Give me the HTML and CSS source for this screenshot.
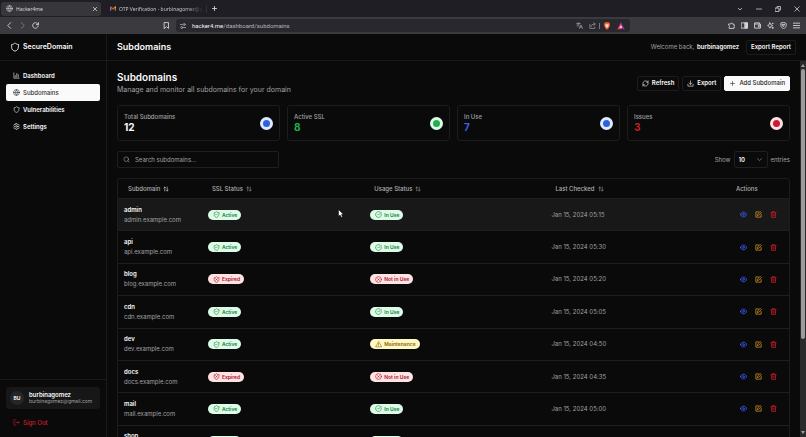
FILE: index.html
```
<!DOCTYPE html>
<html lang="en">
  <head>
    <meta charset="UTF-8" />
    <meta name="viewport" content="width=device-width, initial-scale=1.0" />
    <title>Hacker4me</title>
    <link rel="stylesheet" href="styles.css" />
  </head>
  <body>
    <svg class="sprite" aria-hidden="true">
      <symbol id="globe" viewBox="0 0 24 24"><circle cx="12" cy="12" r="10" /><path d="M12 2a15 15 0 0 0 0 20 15 15 0 0 0 0-20M2 12h20" /></symbol>
      <symbol id="shield" viewBox="0 0 24 24"><path d="M20 13c0 5-3.500 7.500-8 9-4.500-1.500-8-4-8-9V6c3 0 6-1.500 8-4 2 2.500 5 4 8 4z" /></symbol>
      <symbol id="shield-check" viewBox="0 0 24 24"><path d="M20 13c0 5-3.500 7.500-8 9-4.500-1.500-8-4-8-9V6c3 0 6-1.500 8-4 2 2.500 5 4 8 4zM9 12l2 2 4-4" /></symbol>
      <symbol id="shield-x" viewBox="0 0 24 24"><path d="M20 13c0 5-3.500 7.500-8 9-4.500-1.500-8-4-8-9V6c3 0 6-1.500 8-4 2 2.500 5 4 8 4zM9 9l6 6M15 9l-6 6" /></symbol>
      <symbol id="check" viewBox="0 0 24 24"><path d="M21.800 10A10 10 0 1 1 17 3.300M9 11l3 3L22 4" /></symbol>
      <symbol id="cross" viewBox="0 0 24 24"><circle cx="12" cy="12" r="10" /><path d="M15 9l-6 6M9 9l6 6" /></symbol>
      <symbol id="warning" viewBox="0 0 24 24"><path d="M12 3 2 20h20zM12 9v4M12 16.500v.5" /></symbol>
      <symbol id="chart" viewBox="0 0 24 24"><path d="M3 3v18h18M8 17v-4M13 17V5M18 17V9" /></symbol>
      <symbol id="gear" viewBox="0 0 24 24"><path d="M10 2h4l.6 3 2 1.100 2.800-1 2 3.500-2.200 2v2.800l2.200 2-2 3.500-2.800-1-2 1.100-.6 3h-4l-.6-3-2-1.100-2.800 1-2-3.500 2.200-2v-2.800l-2.200-2 2-3.500 2.800 1 2-1.100z" /><circle cx="12" cy="12" r="3" /></symbol>
      <symbol id="sort" viewBox="0 0 24 24"><path d="m3 8 4-4 4 4M7 4v16M21 16l-4 4-4-4M17 20V4" /></symbol>
      <symbol id="eye" viewBox="0 0 24 24"><path d="M2 12c0-3 4-8 10-8s10 5 10 8-4 8-10 8-10-5-10-8z" /><circle cx="12" cy="12" r="3" /></symbol>
      <symbol id="edit" viewBox="0 0 24 24"><path d="M12 3H3v18h18v-9M18.500 2.500l3 3L12 15l-4 1 1-4z" /></symbol>
      <symbol id="trash" viewBox="0 0 24 24"><path d="M3 6h18M5 6v16h14V6M8 6V2h8v4M10 11v6M14 11v6" /></symbol>
      <symbol id="refresh" viewBox="0 0 24 24"><path d="M3 12a9 9 0 0 1 15.500-6.200L21 8M21 3v5h-5M21 12a9 9 0 0 1-15.500 6.200L3 16M8 16H3v5" /></symbol>
      <symbol id="download" viewBox="0 0 24 24"><path d="M3 15v6h18v-6M7 10l5 5 5-5M12 15V3" /></symbol>
      <symbol id="plus" viewBox="0 0 24 24"><path d="M5 12h14M12 5v14" /></symbol>
      <symbol id="search" viewBox="0 0 24 24"><circle cx="11" cy="11" r="8" /><path d="m21 21-4.300-4.300" /></symbol>
      <symbol id="logout" viewBox="0 0 24 24"><path d="M9 21H3V3h6M16 17l5-5-5-5M21 12H9" /></symbol>
      <symbol id="chevron-down" viewBox="0 0 24 24"><path d="m5 9 7 7 7-7" /></symbol>
    </svg>

    <div class="browser">
      <div class="tab-bar">
        <div class="tab active">
          <svg class="icon"><use href="#globe" /></svg>
          <span class="tab-title">Hacker4me</span>
          <button class="bare" aria-label="Close tab"><svg class="icon tiny heavy" viewBox="0 0 24 24"><path d="M5 5l14 14M19 5 5 19" /></svg></button>
        </div>
        <div class="tab">
          <svg class="mail-logo" viewBox="0 0 24 18"><path d="M0 2v16h5V6z" fill="#4285f4" /><path d="M24 2v16h-5V6z" fill="#34a853" /><path d="M0 2l3-2 9 7 9-7 3 2v3l-12 9L0 5z" fill="#ea4335" /><path d="M19 3l3-3 2 2v4l-5 3z" fill="#fbbc04" /></svg>
          <span class="tab-title fade">OTP Verification - burbinagomez@g</span>
        </div>
        <button class="bare new-tab" aria-label="New tab"><svg class="icon heavy"><use href="#plus" /></svg></button>
        <div class="window-controls">
          <button class="bare" aria-label="Search tabs"><svg class="icon tiny heavy"><use href="#chevron-down" /></svg></button>
          <button class="bare" aria-label="Minimize"><svg class="icon tiny heavy" viewBox="0 0 24 24"><path d="M2 12h20" /></svg></button>
          <button class="bare" aria-label="Restore"><svg class="icon tiny heavy" viewBox="0 0 24 24"><path d="M2 8h14v14H2zM8 8V2h14v14h-6" /></svg></button>
          <button class="bare" aria-label="Close"><svg class="icon tiny heavy" viewBox="0 0 24 24"><path d="M3 3l18 18M21 3 3 21" /></svg></button>
        </div>
      </div>
      <div class="toolbar">
        <div class="toolbar-nav">
          <button class="bare" aria-label="Back"><svg class="icon heavy" viewBox="0 0 24 24"><path d="m16 2-10 10 10 10" /></svg></button>
          <button class="bare dim" aria-label="Forward"><svg class="icon heavy" viewBox="0 0 24 24"><path d="m8 2 10 10L8 22" /></svg></button>
          <button class="bare" aria-label="Reload"><svg class="icon heavy" viewBox="0 0 24 24"><path d="M21 14a9.500 9.500 0 1 1-2-8l3 3M22 2v7h-7" /></svg></button>
          <button class="bare bookmark" aria-label="Bookmark"><svg class="icon heavy" viewBox="0 0 24 24"><path d="M5 2h14v20l-7-6-7 6z" /></svg></button>
        </div>
        <div class="address">
          <svg class="icon tiny heavy" viewBox="0 0 24 24"><path d="M2 6h7M15 18h7" /><circle cx="17" cy="6" r="4" /><circle cx="7" cy="18" r="4" /></svg>
          <span class="url"><b>hacker4.me</b>/dashboard/subdomains</span>
          <svg class="icon" viewBox="0 0 24 24"><path d="M2 5h12M8 2v3M4 14c4-2 7-5 8-9M4 8c2 4 4 5 7 7M12 22l5-12 5 12M14 18h6" /></svg>
          <svg class="icon" viewBox="0 0 24 24"><path d="M3 8v14h17v-5M7 16c0-6 4-9 14-9M16 2l5 5-5 5" /></svg>
          <span class="bar"></span>
          <svg class="brave" viewBox="0 0 24 24"><path d="M7 1h10l4 4-1 3 1 2-4 9-5 4-5-4-4-9 1-2-1-3z" fill="#f4602d" /><path d="M7 7h10l-1 6-4 5-4-5z" fill="#fbe0d5" /></svg>
          <svg class="brave" viewBox="0 0 24 24"><path d="M12 1 1 22h11z" fill="#e0455a" /><path d="M12 1l11 21H12z" fill="#9c2a9c" /><path d="m12 10 4 7H8z" fill="#fff" /></svg>
        </div>
        <div class="toolbar-tools">
          <button class="bare" aria-label="Extensions"><svg class="icon heavy" viewBox="0 0 24 24"><path d="M3 7h6a3 3 0 1 1 6 0h5v5a3 3 0 1 1 0 5v5H4v-5a3 3 0 0 0 0-5z" /></svg></button>
          <button class="bare" aria-label="Side panel"><svg class="icon heavy" viewBox="0 0 24 24"><path d="M2 3h20v18H2z" /><path d="M14 3h8v18h-8z" fill="currentColor" /></svg></button>
          <button class="bare" aria-label="Wallet"><svg class="icon heavy" viewBox="0 0 24 24"><path d="M19 7V3H2v18h20V7H3M22 11h-7v6h7" /></svg></button>
          <button class="bare" aria-label="Assistant"><svg class="icon heavy" viewBox="0 0 24 24"><path d="M10 3l3 6 6 3-6 3-3 6-3-6-5-3 5-3z" /><circle cx="19" cy="20" r="2" /><circle cx="19" cy="5" r="1" /></svg></button>
          <button class="bare" aria-label="VPN"><svg class="icon heavy" viewBox="0 0 24 24"><path d="M12 1l9 4v7c0 6-5 9-9 11-4-2-9-5-9-11V5z" /><path d="M8 8h8l-4 7z" /></svg></button>
          <button class="bare" aria-label="Menu"><svg class="icon heavy" viewBox="0 0 24 24"><path d="M1 4h22M1 12h22M1 20h22" /></svg></button>
        </div>
      </div>
    </div>

    <div class="app">
      <aside class="sidebar">
        <div class="brand">
          <svg class="icon big"><use href="#shield" /></svg>
          SecureDomain
        </div>
        <nav class="menu">
          <a href="#dashboard"><svg class="icon"><use href="#chart" /></svg>Dashboard</a>
          <a href="#subdomains" class="current"><svg class="icon"><use href="#globe" /></svg>Subdomains</a>
          <a href="#vulnerabilities"><svg class="icon"><use href="#shield" /></svg>Vulnerabilities</a>
          <a href="#settings"><svg class="icon"><use href="#gear" /></svg>Settings</a>
        </nav>
        <div class="account">
          <div class="user-card">
            <div class="avatar">BU</div>
            <div>
              <div class="user-name">burbinagomez</div>
              <div class="user-email">burbinagomez@gmail.com</div>
            </div>
          </div>
          <button class="sign-out"><svg class="icon"><use href="#logout" /></svg>Sign Out</button>
        </div>
      </aside>

      <div class="main">
        <header class="topbar">
          <div class="topbar-title">Subdomains</div>
          <div class="welcome">Welcome back, <b>burbinagomez</b></div>
          <button class="btn">Export Report</button>
        </header>

        <div class="scroll-area">
          <main class="content">
            <div class="page-head">
              <div>
                <h1>Subdomains</h1>
                <p>Manage and monitor all subdomains for your domain</p>
              </div>
              <div class="page-actions">
                <button class="btn"><svg class="icon"><use href="#refresh" /></svg>Refresh</button>
                <button class="btn"><svg class="icon"><use href="#download" /></svg>Export</button>
                <button class="btn primary"><svg class="icon"><use href="#plus" /></svg>Add Subdomain</button>
              </div>
            </div>

            <div class="stats">
              <div class="stat">
                <div><div class="stat-label">Total Subdomains</div><div class="stat-value">12</div></div>
                <span class="dot blue"></span>
              </div>
              <div class="stat">
                <div><div class="stat-label">Active SSL</div><div class="stat-value text-green">8</div></div>
                <span class="dot green"></span>
              </div>
              <div class="stat">
                <div><div class="stat-label">In Use</div><div class="stat-value text-blue">7</div></div>
                <span class="dot blue"></span>
              </div>
              <div class="stat">
                <div><div class="stat-label">Issues</div><div class="stat-value text-red">3</div></div>
                <span class="dot red"></span>
              </div>
            </div>

            <div class="filters">
              <div class="search">
                <svg class="icon"><use href="#search" /></svg>
                <input type="text" placeholder="Search subdomains..." aria-label="Search subdomains" />
              </div>
              <div class="page-size">
                <label for="entries">Show</label>
                <div class="select">
                  <select id="entries">
                    <option>10</option>
                    <option>25</option>
                    <option>50</option>
                  </select>
                  <svg class="icon"><use href="#chevron-down" /></svg>
                </div>
                <span>entries</span>
              </div>
            </div>

            <div class="table-box">
              <table class="domains">
                <thead>
                  <tr>
                    <th class="col-name"><button class="sort sorted">Subdomain<svg class="icon"><use href="#sort" /></svg></button></th>
                    <th class="col-ssl"><button class="sort">SSL Status<svg class="icon"><use href="#sort" /></svg></button></th>
                    <th class="col-usage"><button class="sort">Usage Status<svg class="icon"><use href="#sort" /></svg></button></th>
                    <th class="col-checked"><button class="sort">Last Checked<svg class="icon"><use href="#sort" /></svg></button></th>
                    <th class="col-actions">Actions</th>
                  </tr>
                </thead>
                <tbody id="domain-rows"></tbody>
              </table>
            </div>
          </main>

          <div class="scrollbar" aria-hidden="true">
            <span class="arrow up"></span>
            <span class="thumb"></span>
            <span class="arrow down"></span>
          </div>
        </div>
      </div>
    </div>

    <svg class="pointer" viewBox="0 0 12 18" aria-hidden="true"><path d="M1 1v14l3-3 3 5 2-1-2-5h4z" /></svg>

    <script src="script.js"></script>
  </body>
</html>
```

FILE: styles.css
```
* {
  box-sizing: border-box;
}

body {
  margin: 0;
  height: 100vh;
  display: flex;
  flex-direction: column;
  overflow: hidden;
  background-color: #0a0a0a;
  color: #fafafa;
  font-family: Inter, sans-serif;
  font-size: 6px;
  line-height: 8px;
}

button,
input,
select {
  font: inherit;
  color: inherit;
  margin: 0;
}

b {
  font-weight: 600;
}

.sprite {
  display: none;
}

.icon {
  width: 7px;
  height: 7px;
  flex: none;
  fill: none;
  stroke: currentColor;
  stroke-width: 2;
  stroke-linecap: round;
  stroke-linejoin: round;
}

.icon.tiny {
  width: 6px;
  height: 6px;
}

.icon.big {
  width: 10px;
  height: 10px;
}

.icon.heavy {
  stroke-width: 3;
}

.bare {
  display: flex;
  padding: 0;
  border: none;
  background: none;
}

/* browser chrome */

.browser {
  flex: none;
  font-family: "Noto Sans", sans-serif;
  font-size: 5px;
  color: #d6d5d8;
}

.tab-bar {
  display: flex;
  align-items: center;
  height: 17px;
  padding: 0 6px 0 1px;
  background-color: #1f1e24;
}

.tab {
  display: flex;
  align-items: center;
  gap: 3px;
  width: 100px;
  height: 14px;
  padding: 0 3px 0 5px;
  border-radius: 3px;
}

.tab.active {
  background-color: #37363b;
}

.tab + .tab {
  width: 106px;
  padding-left: 9px;
  border-right: 1px solid #302f35;
  border-radius: 0;
  height: 8px;
}

.tab-title {
  flex: 1;
  overflow: hidden;
  white-space: nowrap;
}

.fade {
  color: #c5c4c8;
  mask-image: linear-gradient(to right, #000 80%, transparent);
}

.mail-logo {
  width: 6px;
  height: 5px;
  flex: none;
}

.new-tab {
  margin-left: 4px;
}

.window-controls {
  display: flex;
  gap: 13px;
  margin-left: auto;
}

.toolbar {
  display: grid;
  grid-template-columns: 170px 1fr 170px;
  gap: 6px;
  align-items: center;
  height: 17px;
  background-color: #3b3a3f;
}

.toolbar-nav,
.toolbar-tools {
  display: flex;
  gap: 6px;
  padding: 0 6px;
}

.toolbar-nav {
  padding-right: 0;
}

.toolbar-tools {
  justify-content: flex-end;
}

.dim {
  color: #85848a;
}

.bookmark {
  margin-left: auto;
}

.address {
  display: flex;
  align-items: center;
  gap: 6px;
  height: 13px;
  padding: 0 5px 0 4px;
  border-radius: 3px;
  background-color: #29282e;
  color: #b4b3b8;
}

.url {
  flex: 1;
  font-family: Roboto, sans-serif;
  font-size: 6px;
}

.url b {
  color: #f0f0f0;
  font-weight: 400;
}

.bar {
  width: 1px;
  height: 6px;
  margin: 0 -3px;
  background-color: #77767b;
}

.brave {
  width: 8px;
  height: 8px;
}

/* sidebar */

.app {
  display: flex;
  flex: 1;
  min-height: 0;
}

.sidebar {
  display: flex;
  flex-direction: column;
  flex: none;
  width: 107px;
  border-right: 1px solid #1a1a1a;
}

.brand {
  display: flex;
  align-items: center;
  gap: 3px;
  height: 27px;
  padding: 0 10px;
  border-bottom: 1px solid #1a1a1a;
  font-size: 7px;
  font-weight: 600;
}

.menu {
  flex: 1;
  padding: 6px;
}

.menu a,
.sign-out {
  display: flex;
  align-items: center;
  gap: 3px;
  width: 100%;
  height: 17px;
  padding: 0 7px;
  border: none;
  border-radius: 2px;
  background: none;
  color: #fafafa;
  font-weight: 600;
  text-decoration: none;
}

.menu a.current {
  background-color: #fafafa;
  color: #333;
  font-weight: 500;
}

.account {
  padding: 7px 6px 6px;
  border-top: 1px solid #1a1a1a;
}

.user-card {
  display: flex;
  align-items: center;
  gap: 5px;
  height: 22px;
  margin-bottom: 5px;
  padding: 0 4px;
  border-radius: 3px;
  background-color: #171717;
}

.avatar {
  width: 14px;
  height: 14px;
  border-radius: 50%;
  background-color: #262626;
  font-size: 5px;
  font-weight: 600;
  line-height: 14px;
  text-align: center;
}

.user-name {
  font-weight: 600;
  line-height: 7px;
}

.user-email {
  color: #a1a1a1;
  font-size: 5px;
  line-height: 7px;
}

.sign-out {
  color: #c81e2c;
  font-weight: 500;
}

/* main column */

.main {
  display: flex;
  flex-direction: column;
  flex: 1;
  min-width: 0;
}

.topbar {
  display: flex;
  align-items: center;
  gap: 7px;
  flex: none;
  height: 27px;
  padding: 0 10px;
  border-bottom: 1px solid #1a1a1a;
}

.topbar-title {
  flex: 1;
  font-size: 9px;
  font-weight: 600;
}

.welcome {
  color: #a1a1a1;
}

.welcome b {
  margin-left: 1px;
  color: #fafafa;
}

.btn {
  display: flex;
  align-items: center;
  gap: 3px;
  height: 15px;
  padding: 0 4px;
  border: 1px solid #1c1c1c;
  border-radius: 2px;
  background-color: #0a0a0a;
  font-weight: 600;
}

.btn.primary {
  border-color: #fafafa;
  background-color: #fafafa;
  color: #262626;
  font-weight: 500;
}

.scroll-area {
  display: flex;
  flex: 1;
  min-height: 0;
}

.content {
  flex: 1;
  min-width: 0;
  padding: 10px;
  overflow: hidden;
}

.page-head {
  display: flex;
  align-items: center;
  justify-content: space-between;
  margin-bottom: 10px;
}

.page-head h1 {
  margin: 0;
  font-size: 10px;
  font-weight: 600;
  line-height: 13px;
}

.page-head p {
  margin: 0;
  color: #a1a1a1;
  font-size: 7px;
  line-height: 11px;
}

.page-actions {
  display: flex;
  gap: 3px;
}

.stats {
  display: grid;
  grid-template-columns: repeat(4, 1fr);
  gap: 7px;
  margin-bottom: 10px;
}

.stat {
  display: flex;
  align-items: center;
  justify-content: space-between;
  height: 36px;
  padding: 0 6px;
  border: 1px solid #1c1c1c;
  border-radius: 3px;
}

.stat-label {
  color: #a1a1a1;
  font-weight: 500;
}

.stat-value {
  font-size: 10px;
  font-weight: 700;
  line-height: 13px;
}

.text-green {
  color: #22b04c;
}

.text-blue {
  color: #3d5ee6;
}

.text-red {
  color: #c81e2c;
}

.dot {
  width: 13px;
  height: 13px;
  border: 3px solid;
  border-radius: 50%;
}

.dot.blue {
  border-color: #dbeafe;
  background-color: #2f5fe0;
}

.dot.green {
  border-color: #dcfce7;
  background-color: #22b04c;
}

.dot.red {
  border-color: #ffe2e2;
  background-color: #d01834;
}

.filters {
  display: flex;
  align-items: center;
  justify-content: space-between;
  margin-bottom: 10px;
}

.search {
  display: flex;
  align-items: center;
  gap: 5px;
  width: 24%;
  height: 17px;
  padding: 0 5px;
  border: 1px solid #1f1f1f;
  border-radius: 2px;
  color: #a1a1a1;
}

.search input {
  flex: 1;
  min-width: 0;
  padding: 0;
  border: none;
  outline: none;
  background: none;
}

.search input::placeholder {
  color: #a1a1a1;
}

.page-size {
  display: flex;
  align-items: center;
  gap: 3px;
  color: #a1a1a1;
}

.select {
  position: relative;
}

.select select {
  display: block;
  width: 34px;
  height: 17px;
  padding: 0 4px;
  border: 1px solid #1f1f1f;
  border-radius: 2px;
  background-color: #0a0a0a;
  color: #fafafa;
  font-weight: 600;
  appearance: none;
}

.select .icon {
  position: absolute;
  top: 5px;
  right: 5px;
  pointer-events: none;
}

/* table */

.table-box {
  border: 1px solid #1c1c1c;
  border-radius: 3px;
}

.domains {
  width: 100%;
  height: 278px;
  table-layout: fixed;
  border-collapse: separate;
  border-spacing: 0;
}

.domains th {
  height: 19px;
  padding: 0 6px;
  color: #b0b0b0;
  font-weight: 500;
  text-align: left;
}

.domains td {
  height: 32px;
  padding: 0 6px;
  border-top: 1px solid #1e1e1e;
}

.domains tr.hovered td {
  background-color: #181818;
}

.col-name {
  width: 12.5%;
}

.col-ssl {
  width: 24.2%;
}

.col-usage {
  width: 27%;
}

.col-checked {
  width: 27.5%;
}

.sort {
  display: flex;
  align-items: center;
  gap: 3px;
  padding: 0 4px;
  border: none;
  background: none;
}

.sort .icon {
  width: 6px;
  height: 6px;
}

.sorted .icon {
  color: #fafafa;
}

.name {
  font-weight: 600;
  line-height: 10px;
}

.host {
  color: #a1a1a1;
  line-height: 10px;
}

.checked {
  color: #a1a1a1;
}

.badge {
  display: inline-flex;
  align-items: center;
  gap: 2px;
  height: 10px;
  padding: 0 4px 0 5px;
  border-radius: 5px;
  font-size: 5px;
  font-weight: 600;
  vertical-align: middle;
}

.badge.good {
  background-color: #dcfce7;
  color: #1a7a3e;
}

.badge.bad {
  background-color: #ffe2e2;
  color: #a3142c;
}

.badge.warn {
  background-color: #fef9c2;
  color: #94610a;
}

.row-actions {
  display: flex;
}

.row-actions button {
  display: flex;
  justify-content: center;
  width: 15px;
  padding: 4px 0;
  border: none;
  background: none;
}

.row-actions .icon {
  stroke-width: 3;
}

.view {
  color: #3b5bf0;
}

.edit {
  color: #b8891e;
}

.delete {
  color: #b01c28;
}

/* scrollbar */

.scrollbar {
  display: flex;
  flex-direction: column;
  align-items: center;
  flex: none;
  width: 6px;
  padding: 3px 0;
  background-color: #2a2a2a;
}

.thumb {
  width: 4px;
  height: 73%;
  margin: 2px 0 auto;
  border-radius: 2px;
  background-color: #9c9c9c;
}

.arrow {
  border: 2px solid transparent;
}

.arrow.up {
  border-top: none;
  border-bottom: 3px solid #a0a0a0;
}

.arrow.down {
  border-bottom: none;
  border-top: 3px solid #a0a0a0;
}

.pointer {
  position: absolute;
  top: 209px;
  left: 338px;
  width: 6px;
  height: 9px;
  fill: #fff;
  stroke: #000;
}
```

FILE: script.js
```
const domains = [
  { name: "admin", ssl: "Active", usage: "In Use", checked: "Jan 15, 2024 05:15", hovered: true },
  { name: "api", ssl: "Active", usage: "In Use", checked: "Jan 15, 2024 05:30" },
  { name: "blog", ssl: "Expired", usage: "Not in Use", checked: "Jan 15, 2024 05:20" },
  { name: "cdn", ssl: "Active", usage: "In Use", checked: "Jan 15, 2024 05:05" },
  { name: "dev", ssl: "Active", usage: "Maintenance", checked: "Jan 15, 2024 04:50" },
  { name: "docs", ssl: "Expired", usage: "Not in Use", checked: "Jan 15, 2024 04:35" },
  { name: "mail", ssl: "Active", usage: "In Use", checked: "Jan 15, 2024 05:00" },
  { name: "shop", ssl: "Active", usage: "In Use", checked: "Jan 15, 2024 05:25" },
];

const badges = {
  Active: ["good", "shield-check"],
  Expired: ["bad", "shield-x"],
  "In Use": ["good", "check"],
  "Not in Use": ["bad", "cross"],
  Maintenance: ["warn", "warning"],
};

function icon(id) {
  return `<svg class="icon"><use href="#${id}" /></svg>`;
}

function badge(label) {
  const [tone, iconId] = badges[label];
  return `<span class="badge ${tone}">${icon(iconId)}${label}</span>`;
}

const tableBody = document.getElementById("domain-rows");

domains.forEach((domain) => {
  const row = document.createElement("tr");
  if (domain.hovered) {
    row.classList.add("hovered");
  }

  row.innerHTML = `
    <td>
      <div class="name">${domain.name}</div>
      <div class="host">${domain.name}.example.com</div>
    </td>
    <td>${badge(domain.ssl)}</td>
    <td>${badge(domain.usage)}</td>
    <td class="checked">${domain.checked}</td>
    <td>
      <div class="row-actions">
        <button class="view" aria-label="View ${domain.name}">${icon("eye")}</button>
        <button class="edit" aria-label="Edit ${domain.name}">${icon("edit")}</button>
        <button class="delete" aria-label="Delete ${domain.name}">${icon("trash")}</button>
      </div>
    </td>
  `;
  tableBody.appendChild(row);
});
```
